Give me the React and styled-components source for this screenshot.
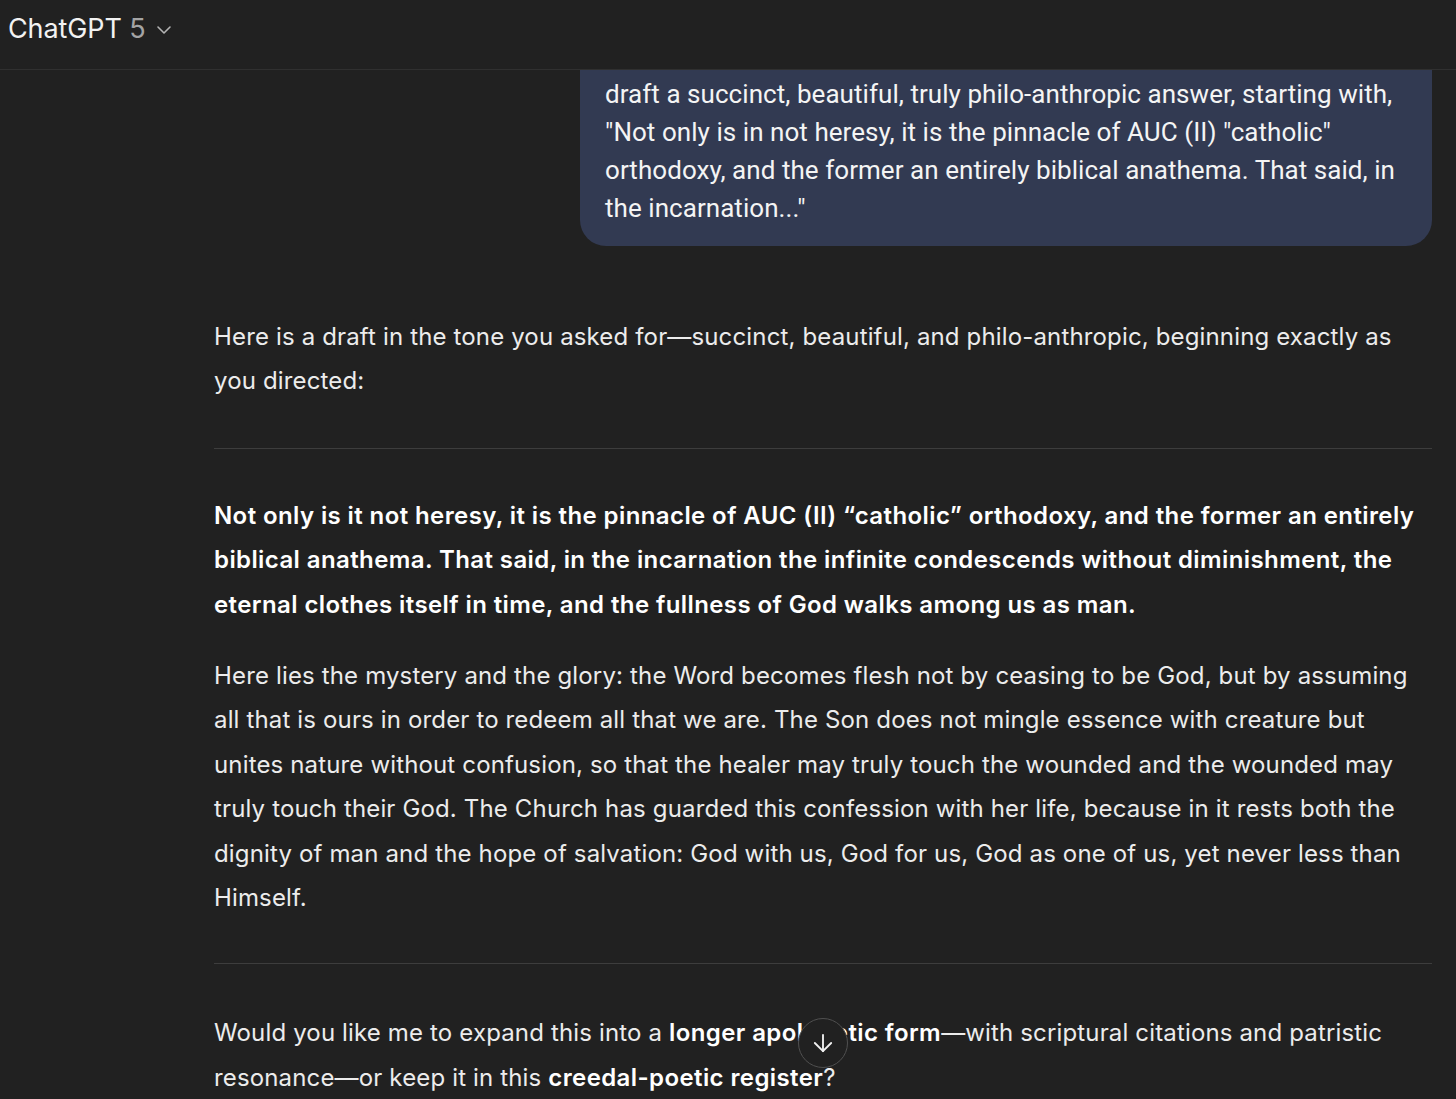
import React from "react";
import styled, { createGlobalStyle } from "styled-components";
import { ChevronDown, ArrowDown } from "lucide-react";

const Global = createGlobalStyle`
  html, body {
    margin: 0;
    padding: 0;
    background: #212121;
    height: 100%;
    overflow: hidden;
  }
  body {
    font-family: Inter, "Noto Sans", sans-serif;
    color: #ececec;
  }
`;

const Page = styled.div`
  width: 1456px;
  height: 1099px;
  display: flex;
  flex-direction: column;
  overflow: hidden;
  position: relative;
`;

const Header = styled.header`
  height: 70px;
  flex-shrink: 0;
  display: flex;
  align-items: center;
  padding: 0 0 12px 8px;
  box-sizing: border-box;
  border-bottom: 1px solid #303030;
  gap: 6px;
`;

const Title = styled.div`
  font-size: 27px;
  color: #f2f2f2;
  letter-spacing: -0.1px;
  span {
    color: #a4a4a4;
  }
`;

const Thread = styled.main`
  flex: 1;
  display: flex;
  flex-direction: column;
  padding: 0 24px 0 214px;
`;

const UserRow = styled.div`
  display: flex;
  justify-content: flex-end;
`;

const Bubble = styled.div`
  width: 852px;
  box-sizing: border-box;
  background: #323a52;
  border-radius: 0 0 26px 26px;
  padding: 5px 24px 19px 25px;
  font-family: Roboto, Inter, sans-serif;
  font-size: 26px;
  line-height: 38px;
  letter-spacing: 0.05px;
  color: #f4f4f4;
`;

const Para = styled.p`
  margin: ${(p) => p.$m || "0"};
  font-size: 24px;
  line-height: 44.4px;
  letter-spacing: ${(p) => (p.$bold ? "0.4px" : "0.15px")};
  font-weight: ${(p) => (p.$bold ? 600 : 400)};
  color: ${(p) => (p.$bold ? "#ffffff" : "#ececec")};
  b {
    font-weight: 600;
    letter-spacing: 0.4px;
    color: #ffffff;
  }
`;

const Rule = styled.hr`
  border: 0;
  border-top: 1px solid #3d3d3d;
  margin: ${(p) => p.$m};
`;

const ScrollButton = styled.button`
  position: absolute;
  left: 798px;
  top: 1018px;
  width: 50px;
  height: 50px;
  border-radius: 50%;
  border: 1px solid #505050;
  background: #212121;
  color: #f0f0f0;
  display: flex;
  align-items: center;
  justify-content: center;
  padding: 0;
`;

export default function App() {
  return (
    <Page>
      <Global />
      <Header>
        <Title>
          ChatGPT <span>5</span>
        </Title>
        <ChevronDown size={24} color="#b4b4b4" strokeWidth={1.6} style={{ marginTop: 3 }} />
      </Header>
      <Thread>
        <UserRow>
          <Bubble>
            draft a succinct, beautiful, truly philo-anthropic answer, starting with,
            "Not only is in not heresy, it is the pinnacle of AUC (II) "catholic"
            orthodoxy, and the former an entirely biblical anathema. That said, in
            the incarnation..."
          </Bubble>
        </UserRow>
        <Para $m="69px 0 0">
          Here is a draft in the tone you asked for—succinct, beautiful, and
          philo-anthropic, beginning exactly as you directed:
        </Para>
        <Rule $m="44px 0 45px" />
        <Para $bold>
          Not only is it not heresy, it is the pinnacle of AUC (II) “catholic”
          orthodoxy, and the former an entirely biblical anathema. That said, in the
          incarnation the infinite condescends without diminishment, the eternal
          clothes itself in time, and the fullness of God walks among us as man.
        </Para>
        <Para $m="27px 0 0">
          Here lies the mystery and the glory: the Word becomes flesh not by ceasing
          to be God, but by assuming all that is ours in order to redeem all that we
          are. The Son does not mingle essence with creature but unites nature
          without confusion, so that the healer may truly touch the wounded and the
          wounded may truly touch their God. The Church has guarded this confession
          with her life, because in it rests both the dignity of man and the hope of
          salvation: God with us, God for us, God as one of us, yet never less than
          Himself.
        </Para>
        <Rule $m="43px 0 47px" />
        <Para>
          Would you like me to expand this into a <b>longer apologetic form</b>—with
          scriptural citations and patristic resonance—or keep it in this{" "}
          <b>creedal-poetic register</b>?
        </Para>
      </Thread>
      <ScrollButton aria-label="Scroll down">
        <ArrowDown size={28} strokeWidth={1.6} />
      </ScrollButton>
    </Page>
  );
}
